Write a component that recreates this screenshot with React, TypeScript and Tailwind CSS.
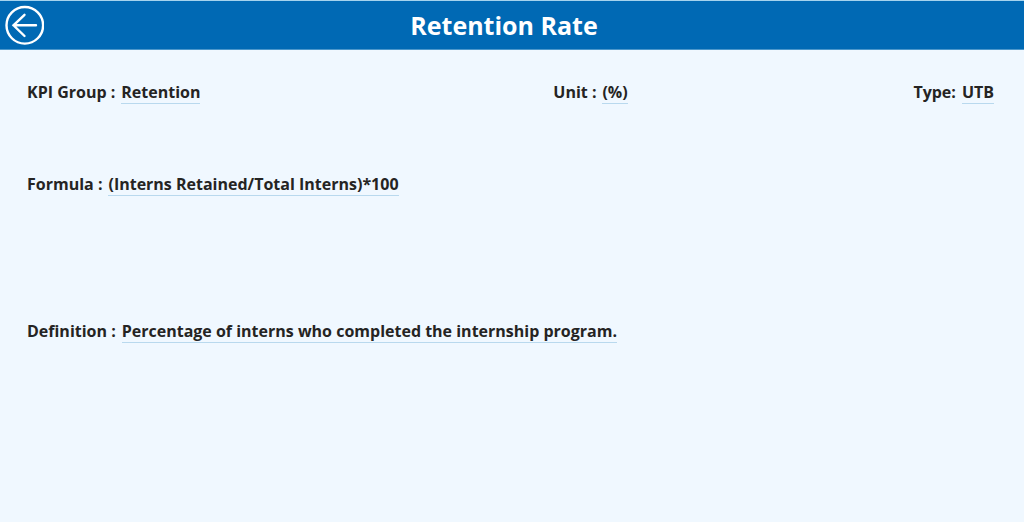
function Field({ label, value }: { label: string; value: string }) {
  return (
    <div className="flex gap-1.5 whitespace-nowrap">
      <dt>{label}</dt>
      <dd className="border-b border-[#b9d9ee] pb-px">{value}</dd>
    </div>
  )
}

export default function App() {
  return (
    <main className="min-h-screen bg-[#f0f8ff] font-['Open_Sans','Noto_Sans',sans-serif] text-[#252423]">
      <header className="grid h-[50px] grid-cols-[1fr_auto_1fr] items-center border-y border-t-[#a5d3ee] border-b-[#4b97cb] bg-[#0069b4] pr-5 pl-1 text-white">
        <button type="button" aria-label="Back" className="h-10 w-10">
          <svg viewBox="0 0 40 40" fill="none" stroke="currentColor" strokeWidth="2.4">
            <circle cx="20.8" cy="20.3" r="18.3" />
            <path d="M32 20.3H9.5M20.5 9.8L9.5 20.3L20.5 31" strokeLinecap="round" />
          </svg>
        </button>
        <h1 className="text-[25px] leading-8 font-bold">Retention Rate</h1>
      </header>

      <dl className="pt-8 pr-[30px] pl-[27px] text-base leading-5 font-bold">
        <div className="grid grid-cols-[19fr_13fr_auto]">
          <Field label="KPI Group :" value="Retention" />
          <Field label="Unit :" value="(%)" />
          <Field label="Type:" value="UTB" />
        </div>
        <div className="mt-[70px]">
          <Field label="Formula :" value="(Interns Retained/Total Interns)*100" />
        </div>
        <div className="mt-[125px]">
          <Field label="Definition :" value="Percentage of interns who completed the internship program." />
        </div>
      </dl>
    </main>
  )
}
